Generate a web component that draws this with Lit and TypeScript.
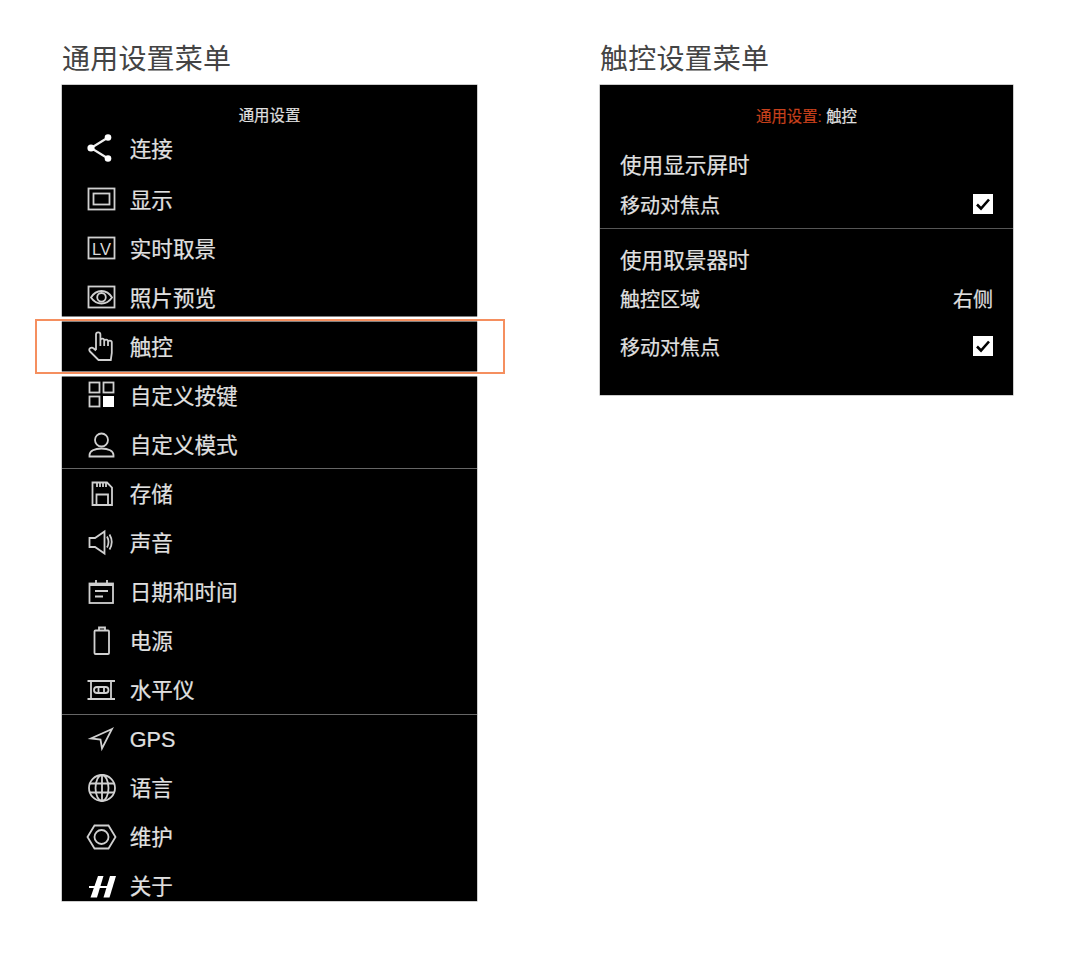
import { LitElement, html, css, svg } from "lit";
import { customElement } from "lit/decorators.js";

const ic = (body: unknown) => html`<svg class="icon" viewBox="0 0 32 32" width="32" height="32">${body}</svg>`;

const icons: Record<string, unknown> = {
  share: svg`<path class="thick" d="M23 4.500L6 15L23 25.500"/><g class="f"><circle cx="23" cy="4.500" r="3.300"/><circle cx="6" cy="15" r="3.600"/><circle cx="23" cy="25.500" r="3.300"/></g>`,
  display: svg`<rect x="3.500" y="4.500" width="26" height="21"/><rect x="8.500" y="9.500" width="16" height="11"/>`,
  lv: svg`<rect x="3.500" y="4.500" width="26" height="21"/><text x="16.500" y="21.500" class="lv" text-anchor="middle">LV</text>`,
  eye: svg`<rect x="3.500" y="4.500" width="26" height="21"/><path d="M6 15.500C9 10.500 13 9 16.500 9S24 10.500 27 15.500C24 20 20 21.500 16.500 21.500S9 20 6 15.500Z"/><circle cx="16.500" cy="15.300" r="4.300"/>`,
  hand: svg`<path d="M11 19V3.500a2.200 2.200 0 0 1 4.400 0V15M15.400 9.500a1.900 1.900 0 0 1 3.800 0V15M19.200 10.500a1.900 1.900 0 0 1 3.800 0V15M23 11.500a1.900 1.900 0 0 1 3.800 0V22l-1 7H13.500L5 20.500c-1-1-1-2.500 0-3.200s2.500-1 3.500 0L11 19.500"/>`,
  grid: svg`<rect x="4.500" y="2.500" width="10" height="10"/><rect x="18.500" y="2.500" width="10" height="10"/><rect x="4.500" y="16.500" width="10" height="10"/><rect x="18" y="16" width="11" height="11" class="f"/>`,
  person: svg`<circle cx="16.500" cy="11" r="6.500"/><path d="M4.500 27.500v-1.500c0-4 5-6.500 12-6.500s12 2.500 12 6.500v1.500Z"/>`,
  card: svg`<path d="M7.500 4.500H22L27 9.500V27H7.500Z"/><path d="M11.500 27V16.500H23V27M12 4.500V9M15 4.500V9M18 4.500V9M21 4.500V9"/>`,
  speaker: svg`<path d="M4.500 11H10L19.500 4.500V26.500L10 20H4.500Z"/><path d="M22 9.500q3 5.500 0 11M24.500 7.500q4.500 7.500 0 15"/>`,
  calendar: svg`<rect x="4.500" y="7.500" width="23.500" height="19.500"/><path d="M4.500 9H28M11 4V9M22 4V9M10 15H23M10 20.500H18"/>`,
  battery: svg`<rect x="9.500" y="5.500" width="14.500" height="23.500" rx="1"/><path d="M14 5.500V2.500H20V5.500"/>`,
  level: svg`<path d="M2.500 7H30M2.500 25H30M6 7V25M26 7V25"/><rect x="9" y="13" width="14.500" height="6" rx="3"/><path d="M13.500 13V19M19 13V19"/>`,
  gps: svg`<path d="M27 6L6 15.500L15.500 16.500L17 25.500Z"/>`,
  globe: svg`<circle cx="17" cy="16" r="13"/><ellipse cx="17" cy="16" rx="6.500" ry="13"/><path d="M17 3V29M5 11.500H29M5 20.500H29"/>`,
  nut: svg`<path d="M2.500 16L9.500 4.500H23.500L30.500 16L23.500 27.500H9.500Z"/><circle cx="16.500" cy="16" r="7"/>`,
  h: svg`<g class="f"><path d="M13 6L18.500 6L12 27.500H5.500Z"/><path d="M25 6H31L24.500 27.500H18.500Z"/><path d="M4 16H27V18H4Z"/></g>`,
};

const groups: [string, string][][] = [
  [["share", "连接"], ["display", "显示"], ["lv", "实时取景"], ["eye", "照片预览"], ["hand", "触控"], ["grid", "自定义按键"], ["person", "自定义模式"]],
  [["card", "存储"], ["speaker", "声音"], ["calendar", "日期和时间"], ["battery", "电源"], ["level", "水平仪"]],
  [["gps", "GPS"], ["globe", "语言"], ["nut", "维护"], ["h", "关于"]],
];

@customElement("app-root")
export class AppRoot extends LitElement {
  static styles = css`
    :host {
      display: block;
      position: relative;
      width: 1080px;
      height: 953px;
      background: #fff;
      font-family: "Liberation Sans", "Noto Sans CJK SC", sans-serif;
      overflow: hidden;
    }
    .page {
      display: flex;
      gap: 123px;
      padding-left: 62px;
    }
    .col { width: 415px; }
    .col.right { width: 413px; }
    .title {
      height: 85px;
      box-sizing: border-box;
      padding-top: 42px;
      font-size: 28px;
      line-height: 36px;
      letter-spacing: 0.2px;
      color: #444;
      white-space: nowrap;
    }
    .panel {
      background: #000;
      color: #e0e0e0;
      overflow: hidden;
      box-shadow: 0 0 0 0.5px #999;
      -webkit-text-stroke: 0.2px #e0e0e0;
    }
    .menu { height: 816px; }
    .touch { height: 310px; }
    .head {
      height: 40px;
      box-sizing: border-box;
      padding-top: 23px;
      font-size: 15.4px;
      line-height: 16px;
      text-align: center;
    }
    .row {
      display: flex;
      height: 49px;
      box-sizing: border-box;
      padding: 8px 0 0 23px;
      gap: 12.7px;
      font-size: 21.6px;
      line-height: 33px;
    }
    .row.first { height: 51px; }
    .icon {
      flex: none;
      fill: none;
      stroke: #d0d0d0;
      stroke-width: 1.8;
    }
    .icon .thick { stroke: #eee; stroke-width: 2.2; }
    .icon .f { fill: #fff; stroke: none; }
    .icon .lv {
      fill: #d8d8d8;
      stroke: none;
      font-size: 16.5px;
      font-family: "Liberation Sans", sans-serif;
      -webkit-text-stroke: 0;
    }
    .sep { height: 1px; background: #666; margin: -2px 0 1px; }
    .sep.alt { margin: -1px 0 0; }
    .touch .head {
      height: 62px;
      padding-top: 24px;
    }
    .red {
      color: #c8401c;
      -webkit-text-stroke: 0.2px #c8401c;
    }
    .t-row {
      display: flex;
      align-items: center;
      justify-content: space-between;
      padding: 0 20px;
      white-space: nowrap;
    }
    .heading { height: 33px; font-size: 21.6px; }
    .item { height: 40px; font-size: 20px; }
    .first-item { margin-top: 4px; }
    .heading.second { margin-top: 13px; }
    .item.area { margin-top: 3px; }
    .item.move { margin-top: 8px; }
    .box {
      width: 20px;
      height: 20px;
      display: block;
    }
    .touch .sep { margin: 4px 0 0; background: #555; }
    .highlight {
      position: absolute;
      left: 35px;
      top: 319px;
      width: 466px;
      height: 51px;
      border: 2px solid #f58f5f;
      box-sizing: content-box;
      box-shadow: 0 0 0 2.5px #fff, inset 0 0 0 0.5px #fff;
      pointer-events: none;
    }
  `;

  private check() {
    return html`<svg class="box" viewBox="0 0 20 20"><rect width="20" height="20" fill="#fff"/><path d="M4 10.500L8 14.500L16 5.500" fill="none" stroke="#000" stroke-width="2.600"/></svg>`;
  }

  render() {
    return html`
      <div class="page">
        <section class="col">
          <div class="title">通用设置菜单</div>
          <div class="panel menu">
            <div class="head">通用设置</div>
            ${groups.map((g, gi) => html`
              ${g.map(([icon, label], i) => html`
                <div class="row ${gi === 0 && i === 0 ? "first" : ""}">${ic(icons[icon])}<span>${label}</span></div>
              `)}
              ${gi < 2 ? html`<div class="sep ${gi === 1 ? "alt" : ""}"></div>` : ""}
            `)}
          </div>
        </section>
        <section class="col right">
          <div class="title">触控设置菜单</div>
          <div class="panel touch">
            <div class="head"><span class="red">通用设置:</span> 触控</div>
            <div class="t-row heading">使用显示屏时</div>
            <div class="t-row item first-item"><span>移动对焦点</span>${this.check()}</div>
            <div class="sep"></div>
            <div class="t-row heading second">使用取景器时</div>
            <div class="t-row item area">触控区域<span>右侧</span></div>
            <div class="t-row item move"><span>移动对焦点</span>${this.check()}</div>
          </div>
        </section>
      </div>
      <div class="highlight"></div>
    `;
  }
}
